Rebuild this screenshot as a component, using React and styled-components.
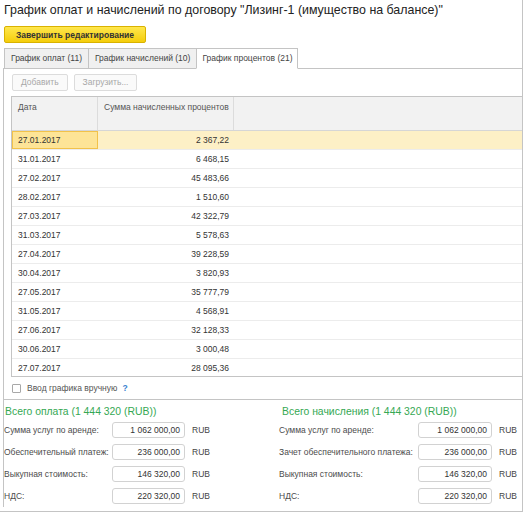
import styled, { createGlobalStyle, css } from 'styled-components';

const GlobalStyle = createGlobalStyle`
    body {
        margin: 0;
        background: #fff;
        font-family: 'Liberation Sans', Arial, sans-serif;
        color: #333;
    }
`;

const rows = [
    ['27.01.2017', '2 367,22'],
    ['31.01.2017', '6 468,15'],
    ['27.02.2017', '45 483,66'],
    ['28.02.2017', '1 510,60'],
    ['27.03.2017', '42 322,79'],
    ['31.03.2017', '5 578,63'],
    ['27.04.2017', '39 228,59'],
    ['30.04.2017', '3 820,93'],
    ['27.05.2017', '35 777,79'],
    ['31.05.2017', '4 568,91'],
    ['27.06.2017', '32 128,33'],
    ['30.06.2017', '3 000,48'],
    ['27.07.2017', '28 095,36'],
];

const payments = [
    ['Сумма услуг по аренде:', '1 062 000,00'],
    ['Обеспечительный платеж:', '236 000,00'],
    ['Выкупная стоимость:', '146 320,00'],
    ['НДС:', '220 320,00'],
];

const accruals = [
    ['Сумма услуг по аренде:', '1 062 000,00'],
    ['Зачет обеспечительного платежа:', '236 000,00'],
    ['Выкупная стоимость:', '146 320,00'],
    ['НДС:', '220 320,00'],
];

const Window = styled.div`
    width: 523px;
    height: 512px;
    box-sizing: border-box;
    border-right: 1px solid #c4c4c4;
    border-bottom: 1px solid #c4c4c4;
    font-size: 8.5px;
`;

const Title = styled.h1`
    margin: 0;
    padding-left: 4px;
    height: 20px;
    line-height: 20px;
    font-size: 12.4px;
    font-weight: normal;
    color: #222;
    white-space: nowrap;
`;

const FinishButton = styled.button`
    display: block;
    margin: 6px 0 0 4px;
    height: 17px;
    width: 142px;
    padding: 0;
    border: 1px solid #d9b200;
    border-radius: 2px;
    background: linear-gradient(#ffe74d, #f4cd0c);
    font-family: inherit;
    font-size: 8.5px;
    font-weight: bold;
    color: #333;
`;

const Body = styled.div`
    margin: 5px 0 0 3px;
`;

const TabRow = styled.div`
    display: flex;
    align-items: flex-end;
    padding-left: 1px;
    border-bottom: 1px solid #c4c4c4;
`;

const Tab = styled.div`
    height: 21px;
    box-sizing: border-box;
    margin-bottom: -1px;
    margin-left: -1px;
    padding: 0 6px;
    line-height: 19px;
    border: 1px solid #c4c4c4;
    background: #f0f0f0;
    color: #444;
    white-space: nowrap;
    &:first-child {
        margin-left: 0;
    }
    ${(p) =>
        p.$active &&
        css`
            background: #fff;
            border-bottom-color: #fff;
            padding: 0 4px 0 5px;
        `}
`;

const Panel = styled.div`
    border-left: 1px solid #c4c4c4;
    border-bottom: 1px solid #c4c4c4;
    padding: 5px 0 0 7px;
`;

const Toolbar = styled.div`
    display: flex;
    gap: 6px;
    padding-left: 1px;
`;

const ToolButton = styled.div`
    height: 17px;
    box-sizing: border-box;
    padding: 0 8px;
    line-height: 15px;
    border: 1px solid #dcdcdc;
    border-radius: 2px;
    background: #fafafa;
    color: #a8a8a8;
`;

const Table = styled.div`
    margin-top: 5px;
    border: 1px solid #c4c4c4;
    border-right: none;
`;

const HeadRow = styled.div`
    display: flex;
    height: 34px;
    box-sizing: border-box;
    background: #f2f2f2;
    border-bottom: 1px solid #d6d6d6;
    color: #555;
`;

const HeadCell = styled.div`
    width: ${(p) => p.$w || 'auto'};
    flex: ${(p) => (p.$w ? 'none' : '1')};
    box-sizing: border-box;
    padding: 5px 0 0 6px;
    border-right: 1px solid #dcdcdc;
    white-space: nowrap;
    overflow: hidden;
    &:last-child {
        border-right: none;
    }
`;

const Rows = styled.div`
    height: 245px;
    overflow: hidden;
`;

const Row = styled.div`
    display: flex;
    height: 19px;
    box-sizing: border-box;
    border-bottom: 1px solid #ececec;
    background: ${(p) => (p.$selected ? '#fdf0c6' : '#fff')};
`;

const Cell = styled.div`
    width: ${(p) => p.$w};
    flex: none;
    box-sizing: border-box;
    padding: 0 5px 0 6px;
    line-height: 18px;
    text-align: ${(p) => (p.$right ? 'right' : 'left')};
    ${(p) =>
        p.$focused &&
        css`
            background: #fde497;
            outline: 1px solid #f2c24a;
            outline-offset: -1px;
        `}
`;

const CheckLine = styled.label`
    display: flex;
    align-items: center;
    height: 22px;
    padding-left: 1px;
    color: #555;
`;

const CheckBox = styled.span`
    width: 9px;
    height: 9px;
    box-sizing: border-box;
    border: 1px solid #a8a8a8;
    border-radius: 1px;
    background: #fff;
    margin-right: 6px;
`;

const Help = styled.span`
    margin-left: 5px;
    color: #3a7fd0;
    font-weight: bold;
`;

const Totals = styled.div`
    display: flex;
    border-left: 1px solid #c4c4c4;
`;

const TotalsColumn = styled.div`
    width: ${(p) => p.$w};
    flex: none;
`;

const TotalsHeading = styled.div`
    height: 19px;
    line-height: 23px;
    padding-left: ${(p) => p.$pad || '1px'};
    font-size: 10.4px;
    color: #35a853;
    white-space: nowrap;
`;

const FormRow = styled.div`
    display: flex;
    align-items: center;
    height: 22px;
`;

const Label = styled.div`
    width: ${(p) => p.$w};
    flex: none;
    color: #4c4c4c;
    white-space: nowrap;
`;

const Amount = styled.div`
    width: ${(p) => p.$w};
    height: 16px;
    box-sizing: border-box;
    flex: none;
    padding-right: 4px;
    line-height: 14px;
    text-align: right;
    border: 1px solid #d2d2d2;
    border-radius: 3px;
    background: #fff;
    color: #333;
`;

const Currency = styled.div`
    margin-left: 7px;
    color: #444;
`;

function TotalsBlock({ title, items, width, labelWidth, inputWidth, pad }) {
    return (
        <TotalsColumn $w={width}>
            <TotalsHeading $pad={pad}>{title}</TotalsHeading>
            {items.map(([label, value]) => (
                <FormRow key={label}>
                    <Label $w={labelWidth}>{label}</Label>
                    <Amount $w={inputWidth}>{value}</Amount>
                    <Currency>RUB</Currency>
                </FormRow>
            ))}
        </TotalsColumn>
    );
}

export default function App() {
    return (
        <>
            <GlobalStyle />
            <Window>
                <Title>
                    График оплат и начислений по договору "Лизинг-1 (имущество
                    на балансе)"
                </Title>
                <FinishButton>Завершить редактирование</FinishButton>
                <Body>
                    <TabRow>
                        <Tab>График оплат (11)</Tab>
                        <Tab>График начислений (10)</Tab>
                        <Tab $active>График процентов (21)</Tab>
                    </TabRow>
                    <Panel>
                        <Toolbar>
                            <ToolButton>Добавить</ToolButton>
                            <ToolButton>Загрузить...</ToolButton>
                        </Toolbar>
                        <Table>
                            <HeadRow>
                                <HeadCell $w="86px">Дата</HeadCell>
                                <HeadCell $w="136px">
                                    Сумма начисленных процентов
                                </HeadCell>
                                <HeadCell />
                            </HeadRow>
                            <Rows>
                                {rows.map(([date, sum], i) => (
                                    <Row key={date} $selected={i === 0}>
                                        <Cell $w="86px" $focused={i === 0}>
                                            {date}
                                        </Cell>
                                        <Cell $w="136px" $right>
                                            {sum}
                                        </Cell>
                                    </Row>
                                ))}
                            </Rows>
                        </Table>
                        <CheckLine>
                            <CheckBox />
                            Ввод графика вручную
                            <Help>?</Help>
                        </CheckLine>
                    </Panel>
                    <Totals>
                        <TotalsBlock
                            title="Всего оплата (1 444 320 (RUB))"
                            items={payments}
                            width="275px"
                            labelWidth="108px"
                            inputWidth="73px"
                        />
                        <TotalsBlock
                            title="Всего начисления (1 444 320 (RUB))"
                            items={accruals}
                            width="240px"
                            labelWidth="139px"
                            inputWidth="74px"
                            pad="3px"
                        />
                    </Totals>
                </Body>
            </Window>
        </>
    );
}
